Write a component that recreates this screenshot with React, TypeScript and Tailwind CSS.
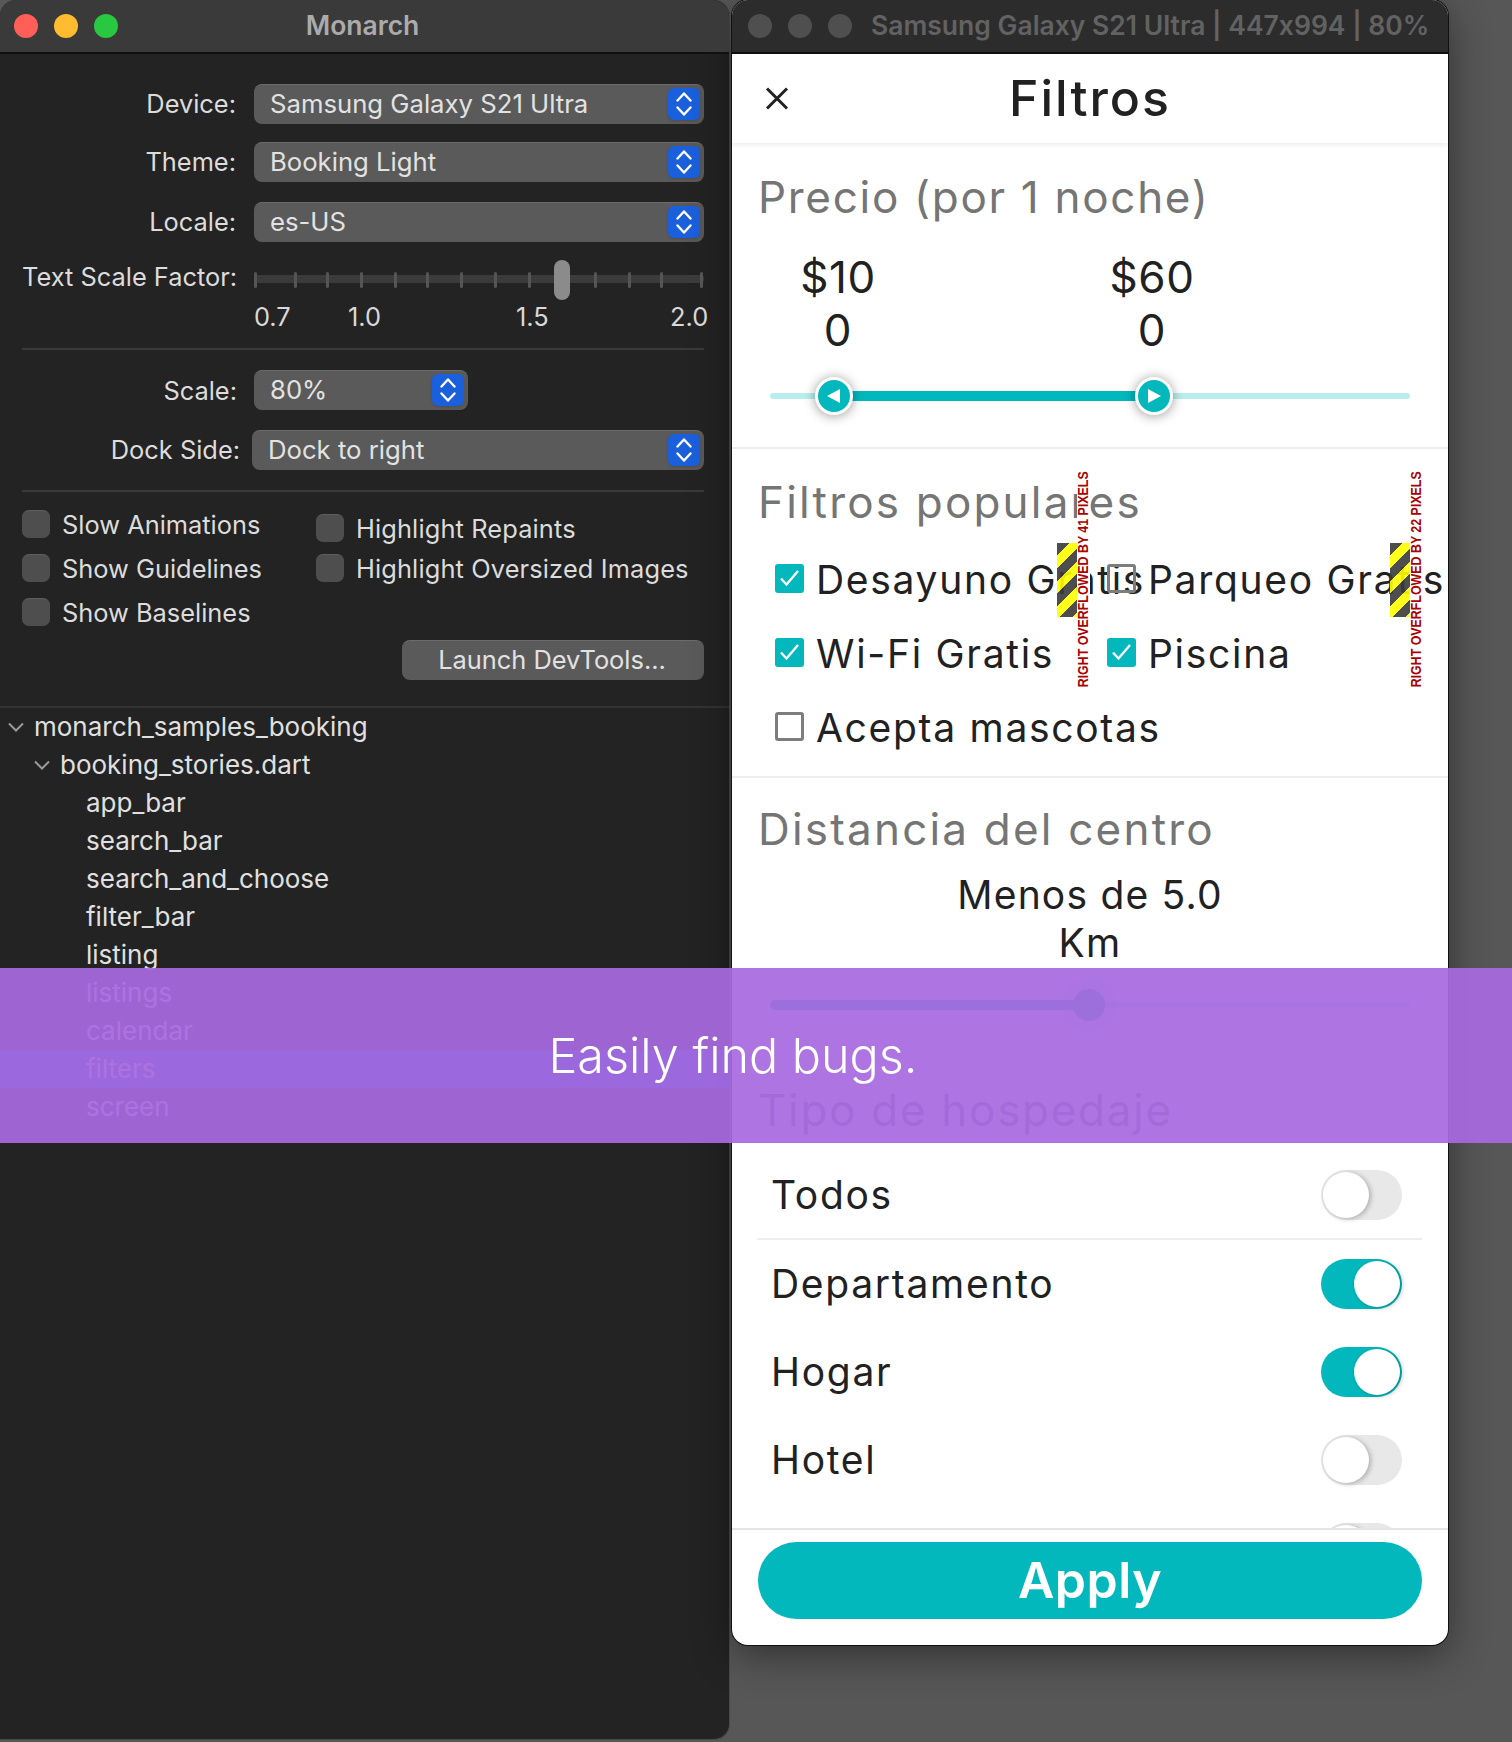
const macFont = "font-['Inter','Liberation_Sans',sans-serif] [font-feature-settings:'calt'_0]";
const appFont = "font-['Inter','Liberation_Sans',sans-serif] [font-feature-settings:'calt'_0]";

const Stepper = () => (
	<div className="w-8 h-8 -mt-[1px] rounded-[6px] bg-[#1a5fdc] shadow-sm flex items-center justify-center shrink-0">
		<svg width="20" height="26" viewBox="0 0 20 26" fill="none" stroke="#ffffff" strokeWidth="2.4" strokeLinecap="round" strokeLinejoin="round">
			<path d="M3.5 9.5 10 2.5l6.5 7" />
			<path d="M3.5 16.5l6.5 7 6.5-7" />
		</svg>
	</div>
);

const MacSelect = ({ value, className }: { value: string; className: string }) => (
	<div className={`h-10 rounded-[8px] bg-[#5a5a5a] border-t border-[#6b6b6b] flex items-center justify-between pl-4 pr-1 text-[#e2e2e2] text-[25.7px] leading-[34px] ${className}`}>
		<span className="-mt-[2px]">{value}</span>
		<Stepper />
	</div>
);

const FormRow = ({ label, value, className }: { label: string; value: string; className: string }) => (
	<div className={`flex items-center ${className}`}>
		<div className="w-[214px] text-right text-[#dcdcdc] text-[25.4px] leading-[34px]">{label}</div>
		<MacSelect value={value} className="ml-[18px] w-[450px]" />
	</div>
);

const ticks = [256, 296, 328, 362, 396, 428, 462, 496, 530, 596, 630, 662, 702];

const TextScale = () => (
	<div className="mt-[18px] flex">
		<div className="w-[214px] text-right text-[#dcdcdc] text-[25.4px] leading-[34px] whitespace-nowrap">Text Scale Factor:</div>
		<div className="ml-[18px] w-[450px]">
			<div className="relative h-10">
				<div className="absolute left-0 right-0 top-[15px] h-2 rounded-sm bg-[#3b3b3b]"></div>
				{ticks.map((t) => (
					<div key={t} className="absolute top-[12px] w-[3px] h-4 rounded-sm bg-[#555555]" style={{ left: t - 256 }}></div>
				))}
				<div className="absolute left-[300px] top-0 w-4 h-10 rounded-[8px] bg-[#8b8b8b]"></div>
			</div>
			<div className="relative h-8 mt-[1px] text-[25.4px] text-[#d8d8d8] leading-8">
				<span className="absolute left-0">0.7</span>
				<span className="absolute left-[94px]">1.0</span>
				<span className="absolute left-[262px]">1.5</span>
				<span className="absolute left-[416px]">2.0</span>
			</div>
		</div>
	</div>
);

const MacCheck = ({ label, className }: { label: string; className?: string }) => (
	<div className={`flex items-center h-7 ${className ?? ""}`}>
		<div className="w-7 h-7 rounded-[7px] bg-[#4e4e4e] border-t border-[#5e5e5e]"></div>
		<span className="ml-3 mt-[2px] text-[25.4px] leading-[34px] text-[#dcdcdc] whitespace-nowrap">{label}</span>
	</div>
);

const Chevron = ({ className }: { className: string }) => (
	<svg className={className} width="16" height="10" viewBox="0 0 16 10" fill="none" stroke="#9a9a9a" strokeWidth="2">
		<path d="M1 1.5 8 8.5 15 1.5" />
	</svg>
);

const stories = ["app_bar", "search_bar", "search_and_choose", "filter_bar", "listing", "listings", "calendar", "filters", "screen"];

const Tree = () => (
	<div className="text-[26px] leading-[34px] text-[#e0e0e0]">
		<div className="h-[38px] flex items-center pl-2">
			<Chevron className="mr-[10px]" />
			<span>monarch_samples_booking</span>
		</div>
		<div className="h-[38px] flex items-center pl-[34px]">
			<Chevron className="mr-[10px]" />
			<span>booking_stories.dart</span>
		</div>
		{stories.map((s) => (
			<div key={s} className={`h-[38px] flex items-center pl-[86px] ${s === "filters" ? "bg-[#005ac0]" : ""}`}>
				<span>{s}</span>
			</div>
		))}
	</div>
);

const LeftWindow = () => (
	<div className={`w-[730px] h-[1740px] shrink-0 flex flex-col rounded-t-[16px] rounded-br-[16px] bg-[#232323] border-r border-b border-[#4a4a4a] ${macFont}`}>
		<div className="relative h-[54px] shrink-0 rounded-t-[16px] bg-[#3a3a3a] border-b-2 border-[#101010] flex items-center justify-center">
			<div className="absolute left-[14px] top-[14px] flex gap-4">
				<div className="w-6 h-6 rounded-full bg-[#ff5f57]"></div>
				<div className="w-6 h-6 rounded-full bg-[#febc2e]"></div>
				<div className="w-6 h-6 rounded-full bg-[#28c840]"></div>
			</div>
			<span className="text-[26.5px] font-semibold text-[#ababab] mr-1">Monarch</span>
		</div>
		<div className="pl-[22px] pr-[25px] pt-[30px]">
			<FormRow label="Device:" value="Samsung Galaxy S21 Ultra" className="" />
			<FormRow label="Theme:" value="Booking Light" className="mt-[18px]" />
			<FormRow label="Locale:" value="es-US" className="mt-5" />
			<TextScale />
			<div className="mt-[15px] h-[2px] bg-[#3a3a3a]"></div>
			<div className="mt-5 flex items-center">
				<div className="w-[215px] mt-[2px] text-right text-[#dcdcdc] text-[25.4px] leading-[34px]">Scale:</div>
				<MacSelect value="80%" className="ml-[17px] w-[214px]" />
			</div>
			<div className="mt-5 flex items-center">
				<div className="w-[218px] text-right text-[#dcdcdc] text-[25.4px] leading-[34px]">Dock Side:</div>
				<MacSelect value="Dock to right" className="ml-3 w-[452px]" />
			</div>
			<div className="mt-5 h-[2px] bg-[#3a3a3a]"></div>
			<div className="mt-[18px] flex">
				<div className="w-[294px] flex flex-col gap-4">
					<MacCheck label="Slow Animations" />
					<MacCheck label="Show Guidelines" />
					<MacCheck label="Show Baselines" />
				</div>
				<div className="pt-1 flex flex-col gap-3 tracking-[0.13px]">
					<MacCheck label="Highlight Repaints" />
					<MacCheck label="Highlight Oversized Images" />
				</div>
			</div>
			<div className="mt-[14px] flex justify-end">
				<div className="w-[302px] h-10 rounded-[8px] bg-[#5a5a5a] border-t border-[#6b6b6b] flex items-center justify-center text-[25.4px] leading-[34px] text-[#e2e2e2]">
					<span className="-mt-[2px] mr-[2px]">Launch DevTools...</span>
				</div>
			</div>
		</div>
		<div className="mt-[26px] h-[2px] bg-[#343434]"></div>
		<Tree />
	</div>
);

const RangeThumb = ({ left, dir }: { left: number; dir: "l" | "r" }) => (
	<div
		className="absolute top-[-16px] w-[38px] h-[38px] rounded-full bg-[#02b8bc] border-[3px] border-white shadow-[0_1px_12px_rgba(0,0,0,0.4)] flex items-center justify-center"
		style={{ left }}
	>
		<svg width="16" height="16" viewBox="0 0 16 16" fill="#ffffff">
			{dir === "l" ? <path d="M14 1v14L1 8z" /> : <path d="M2 1v14l13-7z" />}
		</svg>
	</div>
);

const AppCheck = ({ label, checked, className }: { label: string; checked: boolean; className: string }) => (
	<div className={`flex items-center ${className}`}>
		{checked ? (
			<div className="w-[29px] h-[29px] rounded-[3px] bg-[#02b8bc] flex items-center justify-center shrink-0">
				<svg width="21" height="18" viewBox="0 0 21 18" fill="none" stroke="#ffffff" strokeWidth="2.4">
					<path d="M2 9.5 7.5 15.5 19 2" />
				</svg>
			</div>
		) : (
			<div className="w-[29px] h-[29px] rounded-[3px] border-[3px] border-[#7d7d7d] shrink-0"></div>
		)}
		<span className="ml-3 mt-1 text-[39px] tracking-[1.7px] leading-[48px] text-[#212121] whitespace-nowrap">{label}</span>
	</div>
);

const OverflowFlag = ({ left, px }: { left: number; px: number }) => (
	<>
		<div
			className="absolute top-[-9px] w-5 h-[74px] opacity-90 bg-[repeating-linear-gradient(135deg,#3a3a3a_0,#3a3a3a_9px,#ffff00_9px,#ffff00_18px)]"
			style={{ left }}
		></div>
		<div
			className="absolute top-[-80px] w-[13px] h-[215px] bg-white flex items-center justify-center"
			style={{ left: left + 20 }}
		>
			<span className="-rotate-90 scale-y-[1.2] whitespace-nowrap text-[12.4px] font-bold text-[#aa0000] font-['Liberation_Sans',sans-serif]">
				RIGHT OVERFLOWED BY {px} PIXELS
			</span>
		</div>
	</>
);

const Switch = ({ on }: { on: boolean }) => (
	<div className={`w-[81px] h-[50px] rounded-full p-[2px] flex ${on ? "bg-[#02b8bc] justify-end" : "bg-[#e8e8e8] justify-start"}`}>
		<div className="w-[46px] h-[46px] rounded-full bg-white shadow-[2px_1px_5px_rgba(0,0,0,0.25)]"></div>
	</div>
);

const StayRow = ({ label, on, line }: { label?: string; on: boolean; line?: boolean }) => (
	<div className={`h-[88px] ml-[25px] mr-[26px] pl-[14px] pr-[20px] flex items-center justify-between ${line ? "border-b-2 border-[#eeeeee]" : ""}`}>
		<span className="text-[39px] tracking-[1.7px] text-[#212121]">{label}</span>
		<Switch on={on} />
	</div>
);

const SectionTitle = ({ children, className }: { children: string; className: string }) => (
	<div className={`text-[44px] leading-[56px] text-[#757575] pl-[26px] whitespace-nowrap ${className}`}>{children}</div>
);

const RightWindow = () => (
	<div className="ml-[2px] w-[716px] h-[1645px] flex flex-col rounded-t-[16px] rounded-b-[16px] bg-white ring-1 ring-[#111111] shadow-[0_10px_40px_rgba(0,0,0,0.45)]">
		<div className={`h-[54px] shrink-0 rounded-t-[16px] bg-[#2c2c2c] border-b-2 border-[#101010] flex items-center pl-4 ${macFont}`}>
			<div className="flex gap-4">
				<div className="w-6 h-6 rounded-full bg-[#4f4f4f]"></div>
				<div className="w-6 h-6 rounded-full bg-[#4f4f4f]"></div>
				<div className="w-6 h-6 rounded-full bg-[#4f4f4f]"></div>
			</div>
			<span className="ml-[19px] text-[26.5px] font-semibold text-[#626262] whitespace-nowrap">Samsung Galaxy S21 Ultra | 447x994 | 80%</span>
		</div>
		<div className={`flex-1 flex flex-col min-h-0 ${appFont}`}>
			<div className="relative h-[89px] shrink-0 z-10 bg-white shadow-[0_2px_5px_rgba(0,0,0,0.08)] flex items-center justify-center">
				<svg className="absolute left-[33px] top-[33px]" width="24" height="23" viewBox="0 0 24 23" fill="none" stroke="#212121" strokeWidth="3">
					<path d="M2 1.5 22 21.5M22 1.5 2 21.5" />
				</svg>
				<span className="text-[50px] tracking-[2px] font-medium text-[#212121]">Filtros</span>
			</div>
			<div className="flex-1 min-h-0 overflow-hidden">
				<div className="h-[306px] border-b-2 border-[#eeeeee] pt-[26px]">
					<SectionTitle className="tracking-[1.7px]">Precio (por 1 noche)</SectionTitle>
					<div className="relative h-[110px] mt-[26px] text-[44px] tracking-[0.5px] leading-[53px] text-[#212121] text-center">
						<div className="absolute left-[46px] w-[120px]">$10<br />0</div>
						<div className="absolute left-[360px] w-[120px]">$60<br />0</div>
					</div>
					<div className="relative mx-[38px] h-[6px] mt-[32px] rounded-full bg-[#b8eeee]">
						<div className="absolute left-[64px] top-[-2px] w-[320px] h-[10px] bg-[#02b8bc]"></div>
						<RangeThumb left={45} dir="l" />
						<RangeThumb left={365} dir="r" />
					</div>
				</div>
				<div className="relative h-[329px] border-b-2 border-[#eeeeee] pt-[25px]">
					<SectionTitle className="tracking-[2.2px]">Filtros populares</SectionTitle>
					<div className="relative mt-[22px] pl-[43px] h-[222px]">
						<div className="flex">
							<AppCheck label="Desayuno Gratis" checked className="w-[332px]" />
							<AppCheck label="Parqueo Gratis" checked={false} className="" />
						</div>
						<div className="flex mt-[22px]">
							<AppCheck label="Wi-Fi Gratis" checked className="w-[332px]" />
							<AppCheck label="Piscina" checked className="" />
						</div>
						<AppCheck label="Acepta mascotas" checked={false} className="mt-[22px]" />
						<OverflowFlag left={325} px={41} />
						<OverflowFlag left={658} px={22} />
					</div>
				</div>
				<div className="h-[303px] pt-[23px]">
					<SectionTitle className="tracking-[2.2px]">Distancia del centro</SectionTitle>
					<div className="mt-[14px] text-[39px] tracking-[1.2px] leading-[48px] text-[#212121] text-center">Menos de 5.0<br />Km</div>
					<div className="relative mx-[38px] h-[6px] mt-[35px] rounded-full bg-[#b8eeee]">
						<div className="absolute left-0 top-[-2px] w-[318px] h-[10px] rounded-l-full bg-[#02b8bc]"></div>
						<div className="absolute left-[291px] top-[-25px] w-14 h-14 rounded-full bg-[#02b8bc]/10"></div>
						<div className="absolute left-[303px] top-[-13px] w-8 h-8 rounded-full bg-[#02b8bc]"></div>
					</div>
				</div>
				<div className="h-[71px] pt-[1px]">
					<SectionTitle className="tracking-[1.7px]">Tipo de hospedaje</SectionTitle>
				</div>
				<StayRow label="Todos" on={false} line />
				<StayRow label="Departamento" on />
				<StayRow label="Hogar" on />
				<StayRow label="Hotel" on={false} />
				<StayRow on={false} />
			</div>
			<div className="h-[117px] shrink-0 border-t-2 border-[#e4e4e4] pt-[12px] px-[26px]">
				<div className="h-[77px] rounded-full bg-[#02b8bc] flex items-center justify-center text-[50px] font-semibold tracking-[0.5px] text-white">Apply</div>
			</div>
		</div>
	</div>
);

export default function App() {
	return (
		<div className="relative w-[1512px] h-[1742px] overflow-hidden bg-[#575757] flex items-start">
			<LeftWindow />
			<RightWindow />
			<div className={`absolute left-0 right-0 top-[968px] h-[175px] pr-[46px] pt-[2px] bg-[#a869e0ed] flex items-center justify-center text-[48.5px] font-light text-white ${macFont}`}>
				<span>Easily find bugs.</span>
			</div>
		</div>
	);
}
